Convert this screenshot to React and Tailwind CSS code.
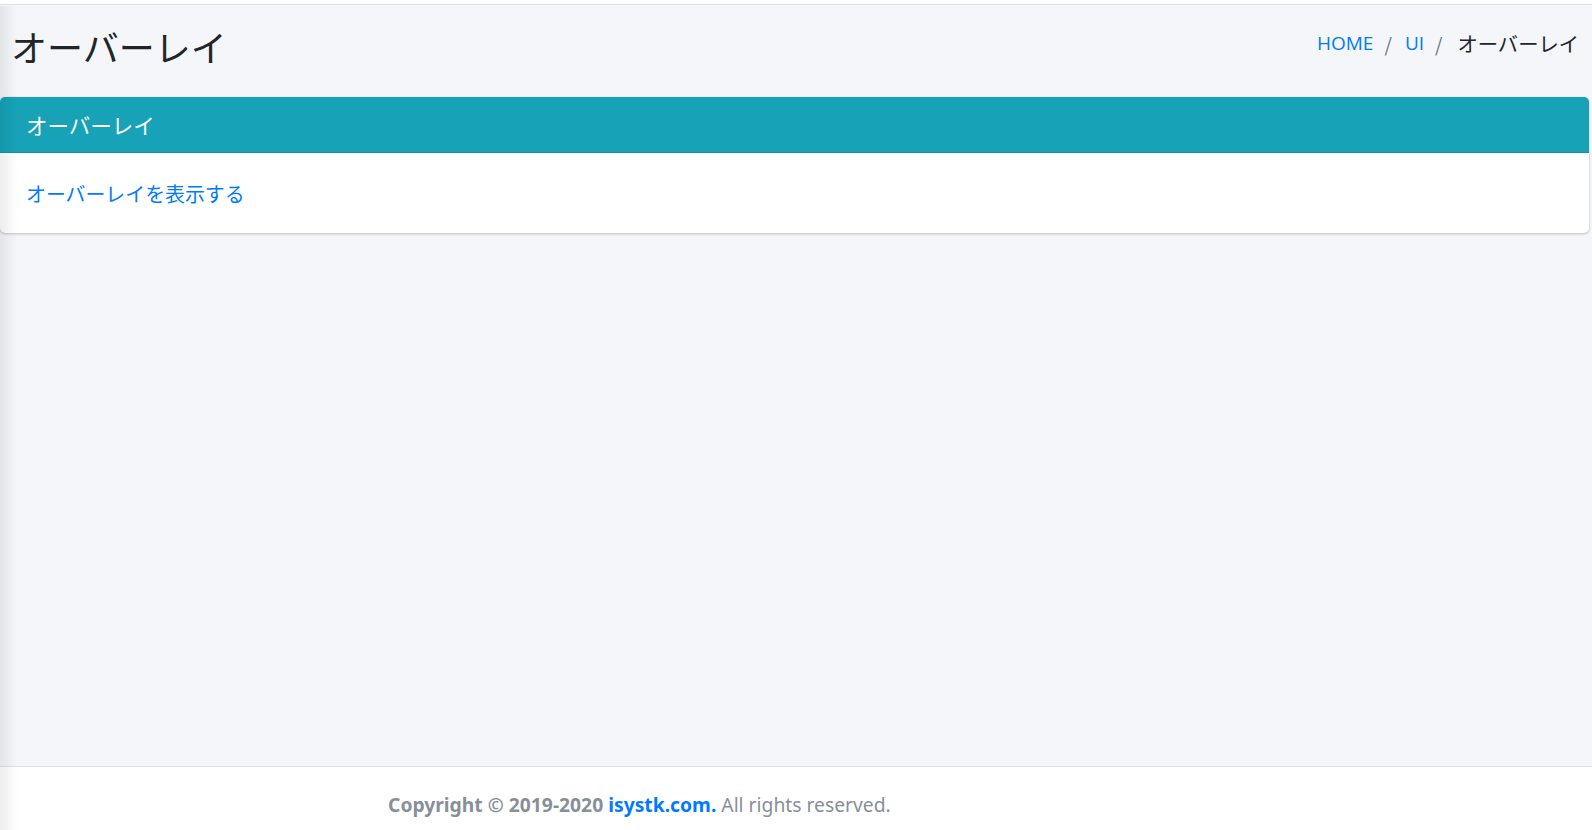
const JP = { fontFamily: '"Noto Sans CJK JP", "Noto Sans", sans-serif' };

const App = () => {
  return (
    <div className="relative w-full h-[830px] flex flex-col bg-[#f4f6f9] overflow-hidden" style={JP}>
      <div className="h-[5px] bg-white border-b border-[#dee2e6] shrink-0"></div>
      <div className="flex-1 flex flex-col">
        <div className="flex flex-row justify-between items-start pl-[11px] pr-[13px] h-[92px]">
          <h1 className="pt-[23px] text-[36px] leading-none text-[#212529] font-normal">オーバーレイ</h1>
          <div className="pt-[28px] flex flex-row items-center text-[19px] leading-none">
            <span className="text-[#007bff]" style={{ fontFamily: '"Open Sans", sans-serif' }}>HOME</span>
            <span className="text-[#6c757d] ml-[11px] mr-[13px]">/</span>
            <span className="text-[#007bff]" style={{ fontFamily: '"Open Sans", sans-serif' }}>UI</span>
            <span className="text-[#6c757d] ml-[11px] mr-[15px]">/</span>
            <span className="text-[#212529] text-[20.3px]">オーバーレイ</span>
          </div>
        </div>
        <div className="mr-[3px] rounded-[5px] bg-white shadow-[0_0_1px_rgba(0,0,0,0.2),0_1px_3px_rgba(0,0,0,0.2)] overflow-hidden">
          <div className="h-[56px] bg-[#17a2b8] border-b border-[#1591a5] flex items-center px-[26px]">
            <span className="text-white text-[21.5px] leading-none">オーバーレイ</span>
          </div>
          <div className="h-[80px] flex items-center px-[26px]">
            <a className="text-[#007bff] text-[19.9px] leading-none pt-[2px]">オーバーレイを表示する</a>
          </div>
        </div>
      </div>
      <footer className="h-[64px] shrink-0 bg-white border-t border-[#dee2e6] flex items-center pl-[388px] pt-[14px]">
        <p className="text-[19.3px] text-[#869099] whitespace-nowrap" style={{ fontFamily: '"Noto Sans", sans-serif' }}>
          <span className="font-bold">Copyright © 2019-2020 </span>
          <span className="font-bold text-[#007bff]">isystk.com.</span>
          <span> All rights reserved.</span>
        </p>
      </footer>
      <div className="pointer-events-none absolute left-0 top-[6px] bottom-0 w-[18px] bg-gradient-to-r from-[rgba(0,0,0,0.07)] to-transparent"></div>
    </div>
  );
};

export default App;
